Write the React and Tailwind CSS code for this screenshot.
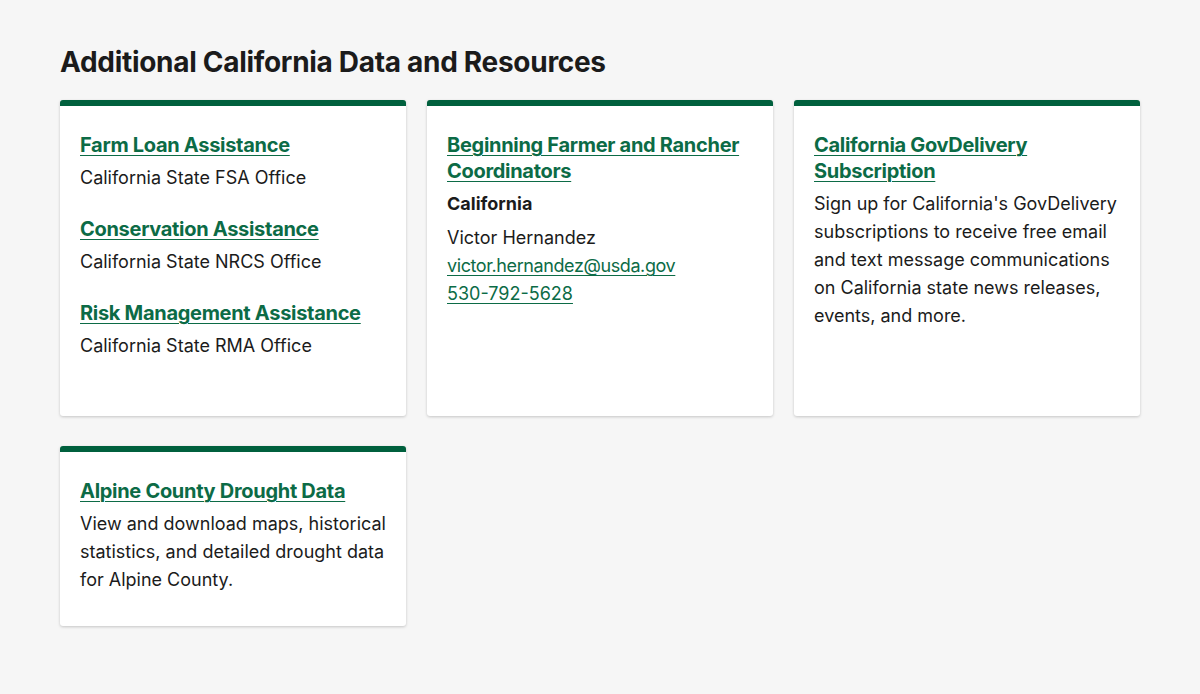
import React from "react";

const linkCls =
  "text-[20px] leading-[26px] font-bold tracking-[-0.3px] text-[#0c6b46] underline underline-offset-[3px] decoration-1";
const bodyCls = "text-[18px] leading-[28px] text-[#1b1b1b]";

const Card = ({ children }) => (
  <div className="bg-white border-t-[6px] border-[#00603d] rounded-[3px] shadow-[0_1px_3px_rgba(0,0,0,0.2)] px-5 pt-[26px] pb-8">
    {children}
  </div>
);

const App = () => {
  const offices = [
    { title: "Farm Loan Assistance", office: "California State FSA Office" },
    { title: "Conservation Assistance", office: "California State NRCS Office" },
    { title: "Risk Management Assistance", office: "California State RMA Office" },
  ];

  return (
    <div
      className="min-h-[694px] bg-[#f6f6f6] px-[60px] pt-[44px]"
      style={{ fontFamily: "Inter, 'Liberation Sans', sans-serif" }}
    >
      <h2 className="text-[28px] leading-[36px] font-bold text-[#1b1b1b] mb-5 tracking-[-0.3px]">
        Additional California Data and Resources
      </h2>

      <div className="grid grid-cols-3 gap-x-[21px] gap-y-[30px]">
        {/* Office links */}
        <Card>
          {offices.map((o) => (
            <div key={o.title} className="mb-6">
              <a href="#" className={linkCls}>
                {o.title}
              </a>
              <p className={`${bodyCls} mt-[6px]`}>{o.office}</p>
            </div>
          ))}
        </Card>

        {/* Coordinators */}
        <Card>
          <a href="#" className={linkCls}>
            Beginning Farmer and Rancher Coordinators
          </a>
          <p className={`${bodyCls} font-bold mt-[6px]`}>California</p>
          <p className={`${bodyCls} mt-[6px]`}>Victor Hernandez</p>
          <p className={bodyCls}>
            <a
              href="#"
              className="text-[#0c6b46] tracking-[-0.4px] underline underline-offset-[3px] decoration-1"
            >
              victor.hernandez@usda.gov
            </a>
          </p>
          <p className={bodyCls}>
            <a href="#" className="text-[#0c6b46] underline underline-offset-[3px] decoration-1">
              530-792-5628
            </a>
          </p>
        </Card>

        {/* GovDelivery */}
        <Card>
          <a href="#" className={linkCls}>
            California GovDelivery Subscription
          </a>
          <p className={`${bodyCls} mt-[6px]`}>
            Sign up for California's GovDelivery subscriptions to receive free email and text
            message communications on California state news releases, events, and more.
          </p>
        </Card>

        {/* Drought data */}
        <Card>
          <a href="#" className={linkCls}>
            Alpine County Drought Data
          </a>
          <p className={`${bodyCls} mt-[6px]`}>
            View and download maps, historical statistics, and detailed drought data for Alpine
            County.
          </p>
        </Card>
      </div>
    </div>
  );
};

export default App;
